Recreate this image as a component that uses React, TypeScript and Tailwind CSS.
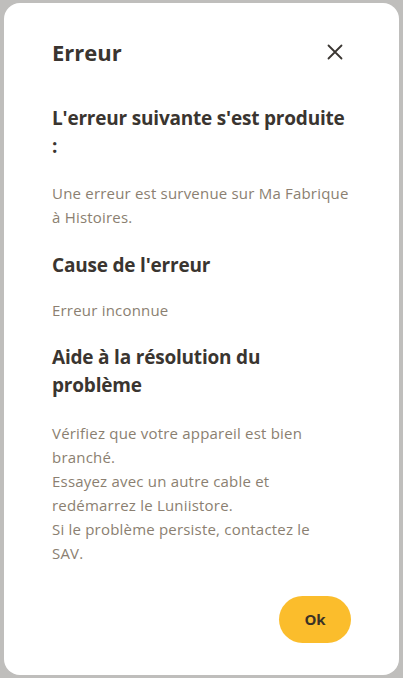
import { useState } from "react";

const body = "text-[15px] leading-[24px] tracking-[0.2px] text-[#8b7f71]";
const heading =
  "text-[19px] leading-[28px] tracking-[-0.2px] font-bold text-[#3a3530]";

function CloseIcon() {
  return (
    <svg width="16" height="16" viewBox="0 0 16 16" fill="none">
      <path
        d="M1.5 1.5L14.5 14.5M14.5 1.5L1.5 14.5"
        stroke="#3a3632"
        strokeWidth="1.8"
        strokeLinecap="round"
      />
    </svg>
  );
}

export default function App() {
  const [open, setOpen] = useState(true);

  return (
    <div
      className="flex h-[678px] w-full bg-[#bfbebc] px-[4px] pt-[3px] pb-[3px]"
      style={{ fontFamily: "'Open Sans', Lato, sans-serif" }}
    >
      {open && (
        <div className="flex w-full flex-col rounded-[16px] bg-white px-[48px] pt-[34px] pb-[32px]">
          {/* Header */}
          <div className="flex h-[30px] items-center justify-between">
            <h1 className="text-[22px] leading-[30px] font-bold text-[#3a3530]">
              Erreur
            </h1>
            <button
              onClick={() => setOpen(false)}
              className="mr-[8px] flex h-[16px] w-[16px] items-center justify-center"
            >
              <CloseIcon />
            </button>
          </div>

          {/* Content */}
          <h2 className={`${heading} mt-[37px]`}>
            L'erreur suivante s'est produite :
          </h2>
          <p className={`${body} mt-[21px]`}>
            Une erreur est survenue sur Ma Fabrique à Histoires.
          </p>

          <h2 className={`${heading} mt-[22px]`}>Cause de l'erreur</h2>
          <p className={`${body} mt-[19px]`}>Erreur inconnue</p>

          <h2 className={`${heading} mt-[21px]`}>
            Aide à la résolution du problème
          </h2>
          <p className={`${body} mt-[22px]`}>
            Vérifiez que votre appareil est bien branché.
            <br />
            Essayez avec un autre cable et redémarrez le Luniistore.
            <br />
            Si le problème persiste, contactez le
            <br />
            SAV.
          </p>

          {/* Footer */}
          <div className="mt-[31px] flex justify-end">
            <button className="h-[47px] w-[72px] rounded-full bg-[#fbbd2c] text-[15px] font-bold text-[#3b3226]">
              Ok
            </button>
          </div>
        </div>
      )}
    </div>
  );
}
